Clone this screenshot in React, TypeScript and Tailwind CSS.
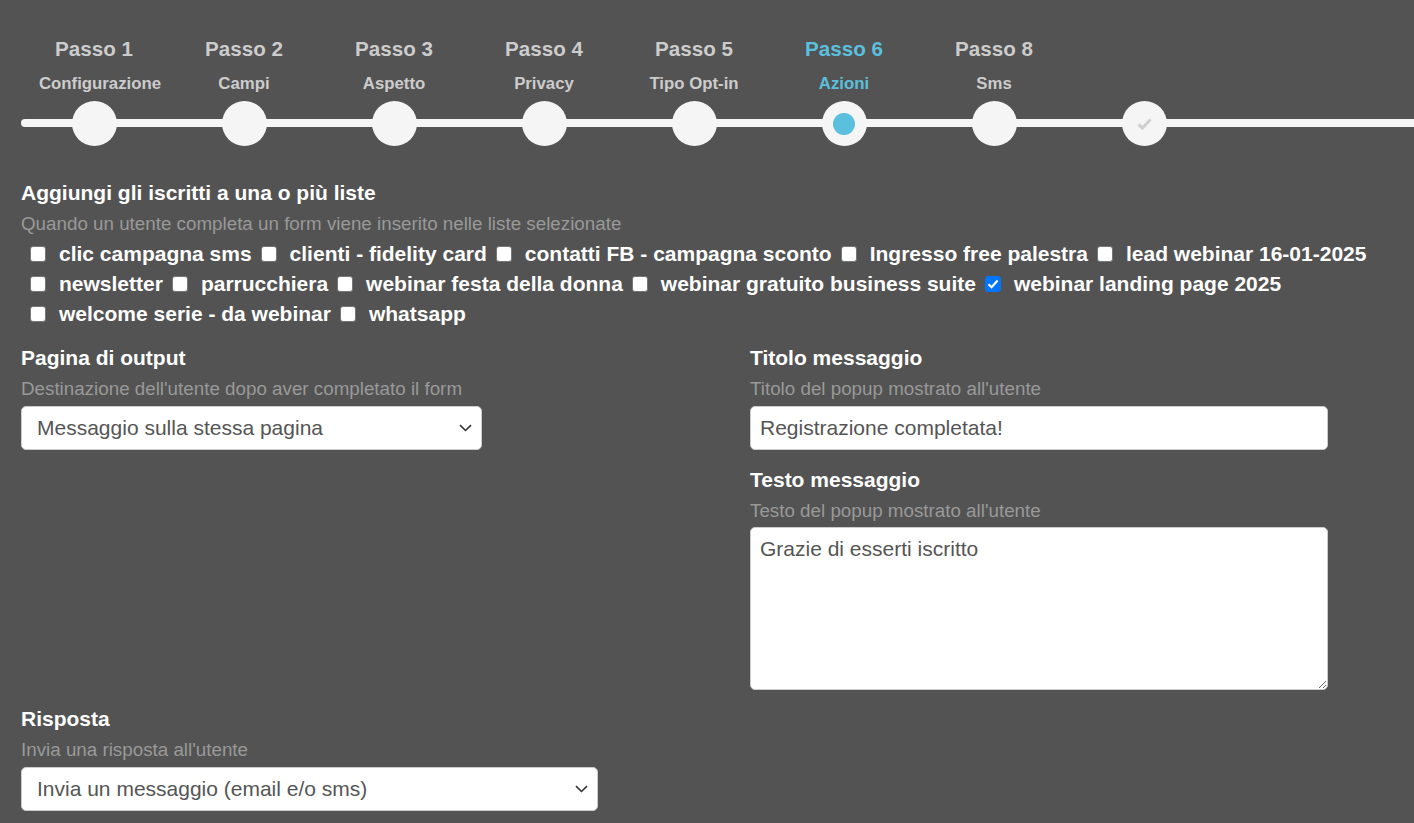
import { useState } from "react";

const steps = [
  { title: "Passo 1", label: "Configurazione" },
  { title: "Passo 2", label: "Campi" },
  { title: "Passo 3", label: "Aspetto" },
  { title: "Passo 4", label: "Privacy" },
  { title: "Passo 5", label: "Tipo Opt-in" },
  { title: "Passo 6", label: "Azioni", active: true },
  { title: "Passo 8", label: "Sms" },
];

const lists = [
  "clic campagna sms",
  "clienti - fidelity card",
  "contatti FB - campagna sconto",
  "Ingresso free palestra",
  "lead webinar 16-01-2025",
  "newsletter",
  "parrucchiera",
  "webinar festa della donna",
  "webinar gratuito business suite",
  "webinar landing page 2025",
  "welcome serie - da webinar",
  "whatsapp",
];

function Chevron() {
  return (
    <svg width="13" height="8" viewBox="0 0 13 8" className="pointer-events-none">
      <path d="M1 1.2 L6.5 6.5 L12 1.2" fill="none" stroke="#333" strokeWidth="1.6" />
    </svg>
  );
}

function FieldHead({ title, hint }: { title: string; hint: string }) {
  return (
    <>
      <div className="text-[21px] leading-[24px] font-bold text-white">{title}</div>
      <div className="mt-[7px] text-[18.8px] leading-[24px] text-[#999999]">{hint}</div>
    </>
  );
}

function SelectBox({ value, width }: { value: string; width: string }) {
  return (
    <div
      className={`mt-[5px] h-[44px] ${width} flex items-center justify-between bg-white border border-[#cccccc] rounded-[5px] pl-[15px] pr-[9px]`}
    >
      <span className="text-[21px] text-[#555555]">{value}</span>
      <Chevron />
    </div>
  );
}

export default function App() {
  const [checked, setChecked] = useState<Set<string>>(new Set(["webinar landing page 2025"]));

  const toggle = (name: string) => {
    setChecked((prev) => {
      const next = new Set(prev);
      next.has(name) ? next.delete(name) : next.add(name);
      return next;
    });
  };

  return (
    <div
      className="min-h-screen bg-[#535353] pt-[37px] pb-[12px]"
      style={{ fontFamily: '"Liberation Sans", Arial, sans-serif' }}
    >
      {/* stepper */}
      <div className="pl-[19px]">
        <div className="flex">
          {steps.map((s, i) => (
            <div key={s.title} className="w-[150px] flex flex-col items-center">
              <div
                className={`text-[20.6px] leading-[24px] font-bold ${s.active ? "text-[#5bc0de]" : "text-[#cccccc]"}`}
              >
                {s.title}
              </div>
              <div
                className={`mt-[13px] text-[16.8px] leading-[20px] font-bold ${s.active ? "text-[#5bc0de]" : "text-[#cccccc]"} ${i === 0 ? "translate-x-[6px]" : ""}`}
              >
                {s.label}
              </div>
            </div>
          ))}
        </div>
        <div className="relative mt-[7px] h-[45px]">
          <div className="absolute left-[2px] right-0 top-[18px] h-[8px] rounded-l-full bg-[#f5f5f5]" />
          <div className="relative flex">
            {[...steps, { title: "end", label: "" }].map((s, i) => (
              <div key={i} className="w-[150px] flex justify-center">
                <div className="w-[45px] h-[45px] rounded-full bg-[#f5f5f5] flex items-center justify-center">
                  {"active" in s && s.active && <div className="w-[22px] h-[22px] rounded-full bg-[#5bc0de]" />}
                  {s.title === "end" && (
                    <svg width="15" height="12" viewBox="0 0 15 12">
                      <path d="M1.5 6.5 L5.5 10 L13.5 1.5" fill="none" stroke="#cfcfcf" strokeWidth="3" />
                    </svg>
                  )}
                </div>
              </div>
            ))}
          </div>
        </div>
      </div>

      {/* liste */}
      <div className="px-[21px] mt-[35px]">
        <div className="text-[21px] leading-[24px] font-bold text-white">Aggiungi gli iscritti a una o più liste</div>
        <div className="mt-[7px] text-[18.8px] leading-[24px] text-[#999999]">
          Quando un utente completa un form viene inserito nelle liste selezionate
        </div>
        <div className="mt-[3px] flex flex-wrap">
          {lists.map((name) => {
            const on = checked.has(name);
            return (
              <label key={name} className="h-[30px] flex items-center cursor-pointer">
                <span className="relative ml-[9px] mr-[13px] w-4 h-4 flex">
                  <input
                    type="checkbox"
                    checked={on}
                    onChange={() => toggle(name)}
                    className="appearance-none m-0 w-4 h-4 bg-white border border-[#767676] rounded-[3px] checked:bg-[#0075ff] checked:border-[#0075ff]"
                  />
                  {on && (
                    <svg
                      width="16"
                      height="16"
                      viewBox="0 0 16 16"
                      className="absolute inset-0 pointer-events-none"
                    >
                      <path d="M3.5 8.2 L6.6 11.2 L12.6 4.6" fill="none" stroke="white" strokeWidth="2.2" />
                    </svg>
                  )}
                </span>
                <span className="text-[21px] font-bold text-white whitespace-nowrap">{name}</span>
              </label>
            );
          })}
        </div>
      </div>

      {/* output + messaggio */}
      <div className="px-[21px] mt-[17px] grid grid-cols-[729px_578px]">
        <div>
          <FieldHead title="Pagina di output" hint="Destinazione dell'utente dopo aver completato il form" />
          <SelectBox value="Messaggio sulla stessa pagina" width="w-[461px]" />
        </div>
        <div>
          <FieldHead title="Titolo messaggio" hint="Titolo del popup mostrato all'utente" />
          <input
            type="text"
            defaultValue="Registrazione completata!"
            className="mt-[5px] h-[44px] w-full bg-white border border-[#cccccc] rounded-[5px] px-[9px] text-[21px] text-[#555555] outline-none"
          />
          <div className="mt-[18px]">
            <FieldHead title="Testo messaggio" hint="Testo del popup mostrato all'utente" />
          </div>
          <textarea
            defaultValue="Grazie di esserti iscritto"
            className="mt-[4px] block h-[163px] w-full bg-white border border-[#cccccc] rounded-[5px] px-[9px] pt-[8px] text-[21px] leading-[26px] text-[#555555] outline-none"
          />
        </div>
      </div>

      {/* risposta */}
      <div className="px-[21px] mt-[17px]">
        <FieldHead title="Risposta" hint="Invia una risposta all'utente" />
        <SelectBox value="Invia un messaggio (email e/o sms)" width="w-[577px]" />
      </div>
    </div>
  );
}
